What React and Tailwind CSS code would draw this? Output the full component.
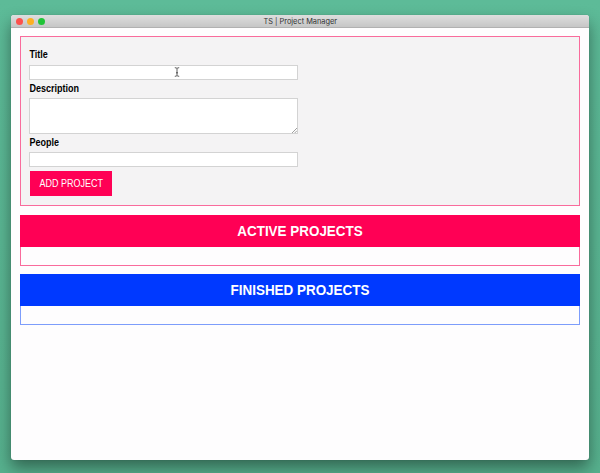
import React from "react";

function TitleBar() {
  return (
    <header className="grid h-[13px] shrink-0 grid-cols-3 items-center rounded-t-[3px] border-b border-[#b1b1b1] bg-linear-to-b from-[#dedede] to-[#c6c6c6] pr-1 pl-[4.5px]">
      <div className="flex gap-[4px]">
        <span className="size-[7px] rounded-full bg-[#fc514d]" />
        <span className="size-[7px] rounded-full bg-[#fdb022]" />
        <span className="size-[7px] rounded-full bg-[#20c437]" />
      </div>
      <h1 className="pt-px text-center text-[7.4px] leading-[12px] whitespace-nowrap text-[#333] [font-family:Inter,Roboto,sans-serif]">
        TS | Project Manager
      </h1>
    </header>
  );
}

function TextCursor() {
  return (
    <svg
      className="pointer-events-none absolute top-[2px] left-[145px]"
      width="6"
      height="10"
      viewBox="0 0 6 10"
      fill="none"
      stroke="#333"
      strokeWidth="0.8"
    >
      <path d="M.8.7Q2.6.7 3 1.6Q3.4.7 5.2.7M3 1.5v7M.8 9.3Q2.6 9.3 3 8.4Q3.4 9.3 5.2 9.3M2 5.8h2" />
    </svg>
  );
}

function ProjectForm() {
  const label = "block h-[12px] w-fit origin-left transform-[scaleX(0.9)] pl-[0.6px] text-[10px] font-bold leading-[12px] text-black";
  const field = "block w-[269px] border border-[#d3d3d3] bg-white outline-none";
  return (
    <form className="h-[170px] border border-[#f96b9c] bg-[#f4f3f4] pt-[12px] pl-[8px]">
      <label htmlFor="title" className={label}>Title</label>
      <div className="relative mt-[4px]">
        <input id="title" className={`${field} h-[15px]`} />
        <TextCursor />
      </div>
      <label htmlFor="description" className={`${label} mt-[3px]`}>Description</label>
      <div className="relative mt-[3px] w-[269px]">
        <textarea id="description" className={`${field} h-[36px] resize-none`} />
        <svg className="absolute right-[1px] bottom-[1px]" width="5" height="5" viewBox="0 0 5 5" stroke="#777" strokeWidth="0.7">
          <path d="M0 5L5 0M2.7 5L5 2.7" />
        </svg>
      </div>
      <label htmlFor="people" className={`${label} mt-[3px]`}>People</label>
      <input id="people" className={`${field} mt-[3px] h-[15px]`} />
      <button
        type="button"
        className="mt-[4px] ml-[1px] flex h-[25px] w-[82px] justify-center bg-[#ff0055] text-[10px] leading-[25px] whitespace-nowrap text-white"
      >
        <span className="block transform-[scaleX(0.9)]">ADD PROJECT</span>
      </button>
    </form>
  );
}

function ProjectList({ title, border, fill }) {
  return (
    <section className={`h-[51px] border ${border}`}>
      <h2 className={`-mx-px -mt-px h-[32px] text-center text-[14px] leading-[32px] font-bold text-white ${fill}`}>
        <span className="block transform-[scaleX(0.96)]">{title}</span>
      </h2>
    </section>
  );
}

export default function App() {
  return (
    <div className="h-[473px] w-[600px] overflow-hidden bg-linear-to-b from-[#5dbb98] to-[#57b18e] px-[11px] pt-[15px] [font-family:'Liberation_Sans',Arial,sans-serif]">
      <div className="flex h-[445px] w-[578px] flex-col rounded-[3px] bg-[#fefdfe] shadow-[0_8px_16px_rgba(0,0,0,0.42),0_0_1px_rgba(0,0,0,0.3)]">
        <TitleBar />
        <main className="flex flex-col px-[9px] pt-[8px]">
          <ProjectForm />
          <div className="mt-[9px] flex flex-col gap-[8px]">
            <ProjectList title="ACTIVE PROJECTS" border="border-[#f96b9c]" fill="bg-[#ff0055]" />
            <ProjectList title="FINISHED PROJECTS" border="border-[#7d9dfb]" fill="bg-[#0039ff]" />
          </div>
        </main>
      </div>
    </div>
  );
}
